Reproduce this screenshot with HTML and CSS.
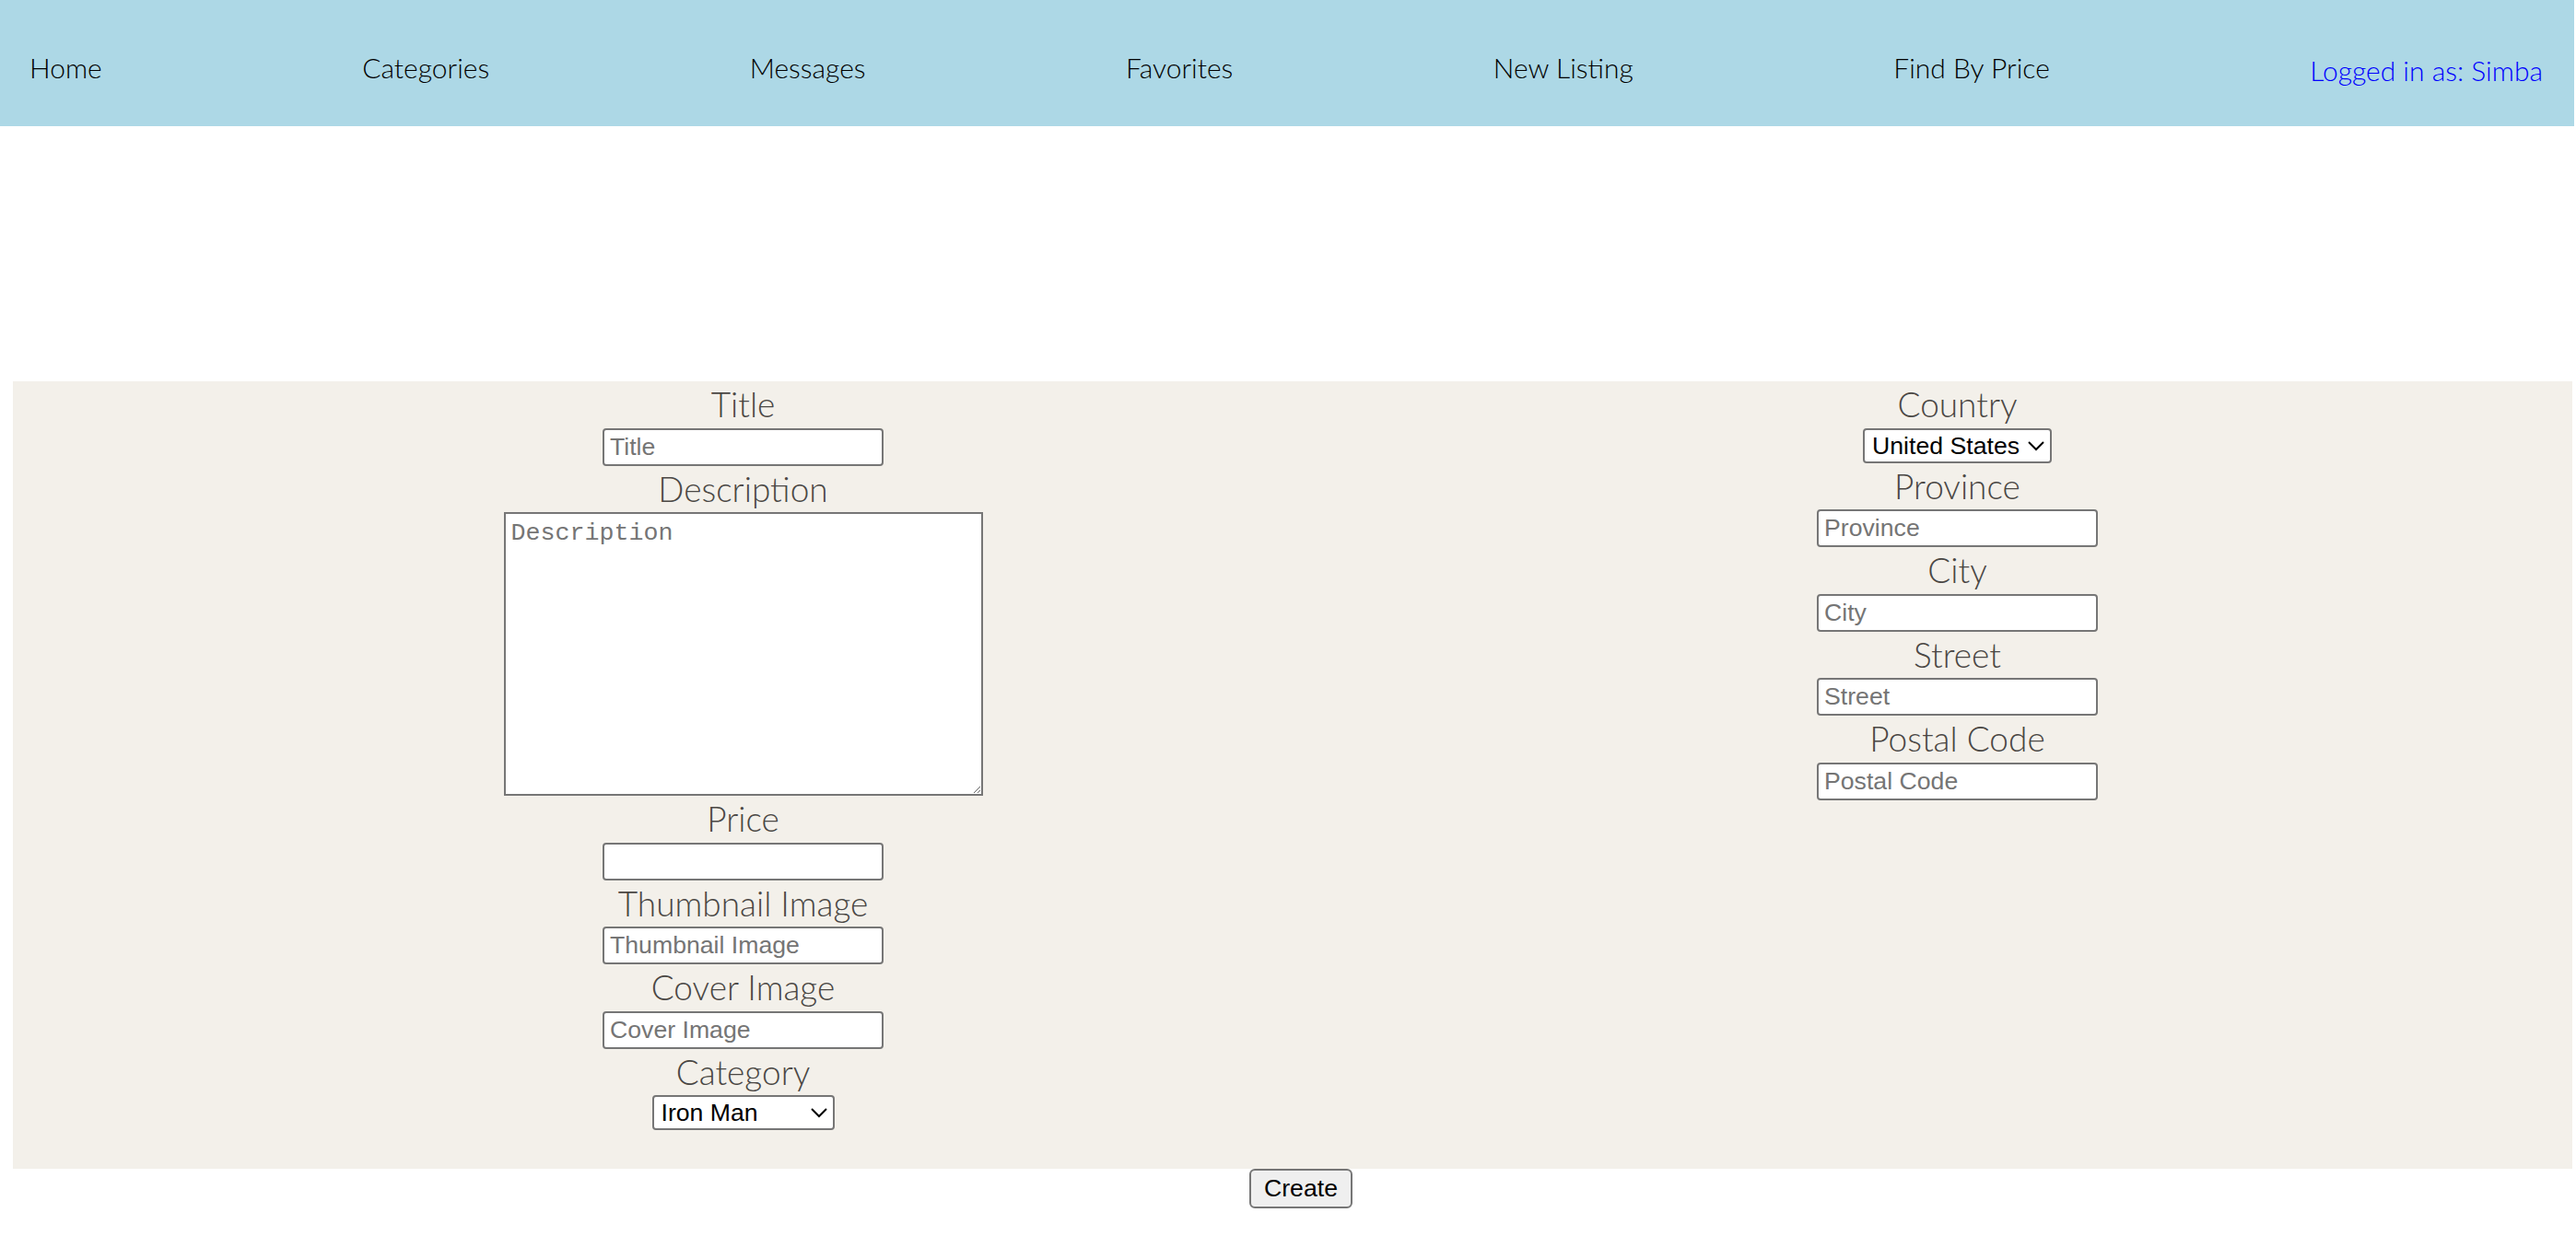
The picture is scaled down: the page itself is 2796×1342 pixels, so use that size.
FILE: index.html
```html
<!DOCTYPE html>
<html lang="en">
<head>
<meta charset="utf-8">
<title>New Listing</title>
<link rel="stylesheet" href="styles.css">
</head>
<body>
<nav class="topnav">
  <a class="nav-link" href="#">Home</a>
  <a class="nav-link" href="#">Categories</a>
  <a class="nav-link" href="#">Messages</a>
  <a class="nav-link" href="#">Favorites</a>
  <a class="nav-link" href="#">New Listing</a>
  <a class="nav-link" href="#">Find By Price</a>
  <span class="nav-user">Logged in as: Simba</span>
</nav>
<main class="page">
  <form class="listing-form">
    <div class="form-panel">
      <div class="field-col col-main">
        <label class="field-label" for="title">Title</label>
        <input class="text-input" id="title" type="text" placeholder="Title">
        <label class="field-label" for="description">Description</label>
        <textarea class="text-area" id="description" placeholder="Description"></textarea>
        <label class="field-label" for="price">Price</label>
        <input class="text-input" id="price" type="number">
        <label class="field-label" for="thumb">Thumbnail Image</label>
        <input class="text-input" id="thumb" type="text" placeholder="Thumbnail Image">
        <label class="field-label" for="cover">Cover Image</label>
        <input class="text-input" id="cover" type="text" placeholder="Cover Image">
        <label class="field-label" for="category">Category</label>
        <select class="select-input select-category" id="category">
          <option>Iron Man</option>
        </select>
      </div>
      <div class="field-col col-address">
        <label class="field-label" for="country">Country</label>
        <select class="select-input select-country" id="country">
          <option>United States</option>
        </select>
        <label class="field-label" for="province">Province</label>
        <input class="text-input" id="province" type="text" placeholder="Province">
        <label class="field-label" for="city">City</label>
        <input class="text-input" id="city" type="text" placeholder="City">
        <label class="field-label" for="street">Street</label>
        <input class="text-input" id="street" type="text" placeholder="Street">
        <label class="field-label" for="postal">Postal Code</label>
        <input class="text-input" id="postal" type="text" placeholder="Postal Code">
      </div>
    </div>
    <div class="actions">
      <button class="create-btn" type="submit">Create</button>
    </div>
  </form>
</main>
</body>
</html>
```

FILE: styles.css
```css
html {
  zoom: 2;
}

body {
  margin: 0;
  background: #ffffff;
  font-family: Lato, "Open Sans", sans-serif;
}

.topnav {
  height: 68.5px;
  box-sizing: border-box;
  padding: 4px 17px 0 16px;
  margin-right: 1px;
  display: flex;
  justify-content: space-between;
  align-items: center;
  background: #add8e6;
  font-size: 15px;
  font-weight: 300;
}

.nav-link {
  color: #000000;
  text-decoration: none;
}

.nav-user {
  color: #0000ff;
  margin-top: 3px;
}

.page {
  padding-top: 138.5px;
}

.form-panel {
  margin: 0 2px 0 7px;
  padding-bottom: 21px;
  display: flex;
  background: #f3f0ea;
}

.field-col {
  display: flex;
  flex-direction: column;
  align-items: center;
}

.col-main {
  width: 792.5px;
}

.col-address {
  width: 525.5px;
}

.field-label {
  font-size: 18.5px;
  line-height: 25.25px;
  font-weight: 300;
  color: #4a4744;
}

.text-input {
  width: 152.5px;
  height: 20.5px;
  box-sizing: border-box;
  margin: 0;
  padding: 1px 3px;
  border: 1px solid #767676;
  border-radius: 2px;
  background: #ffffff;
  font-family: "Liberation Sans", Arial, sans-serif;
  font-size: 13.333px;
}

.text-area {
  width: 260px;
  height: 154px;
  box-sizing: border-box;
  margin: 0;
  padding: 3px;
  border: 1px solid #767676;
  font-family: "Liberation Mono", "Courier New", monospace;
  font-size: 13.333px;
}

.select-input {
  height: 19px;
  box-sizing: border-box;
  margin: 0;
  border: 1px solid #767676;
  border-radius: 2px;
  font-family: "Liberation Sans", Arial, sans-serif;
  font-size: 13.333px;
  color: #000000;
  background: #ffffff;
}

.select-category {
  width: 99px;
}

.select-country {
  width: 102.5px;
}

.actions {
  display: flex;
  justify-content: center;
  padding-left: 14px;
}

.create-btn {
  margin: 0;
  padding: 1px 7px;
  border: 1px solid #767676;
  border-radius: 3px;
  background: #efefef;
  color: #000000;
  font-family: "Liberation Sans", Arial, sans-serif;
  font-size: 13.333px;
  height: 21.5px;
}
```
